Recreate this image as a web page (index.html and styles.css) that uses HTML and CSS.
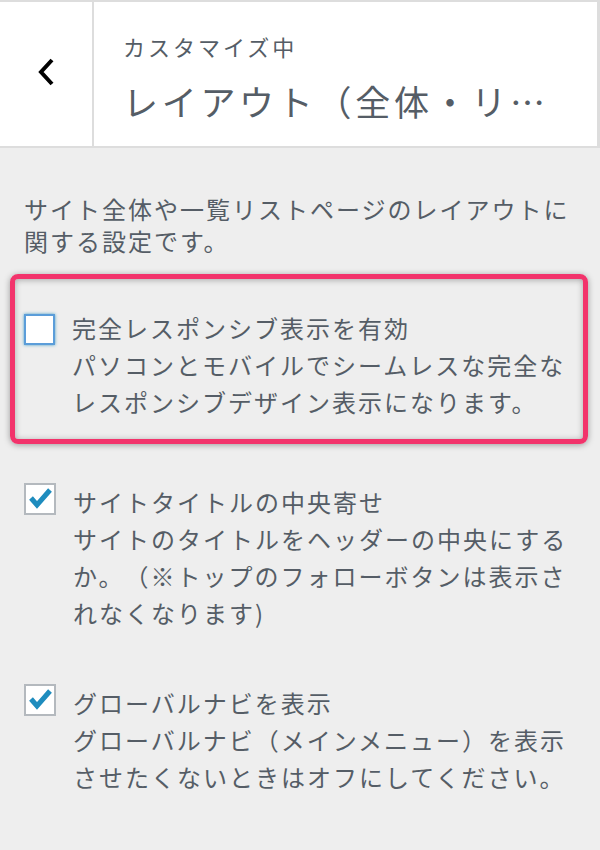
FILE: index.html
```html
<!DOCTYPE html>
<html lang="ja">
<head>
    <meta charset="UTF-8">
    <meta name="viewport" content="width=device-width, initial-scale=1.0">
    <title>カスタマイズ中</title>
    <link rel="stylesheet" href="styles.css">
</head>
<body>
    <div class="header">
        <button class="back" aria-label="戻る">
            <svg width="20" height="30" viewBox="0 0 20 30">
                <polyline points="15,3 4,15 15,27" fill="none" stroke="#000" stroke-width="4"/>
            </svg>
        </button>
        <div class="title-block">
            <span class="subtitle">カスタマイズ中</span>
            <h1 class="title">レイアウト（全体・リストページ）</h1>
        </div>
    </div>

    <div class="panel">
        <p class="desc">サイト全体や一覧リストページのレイアウトに関する設定です。</p>

        <div class="highlight">
            <label class="option">
                <span class="check focus"></span>
                <span class="option-text">完全レスポンシブ表示を有効<br>パソコンとモバイルでシームレスな完全なレスポンシブデザイン表示になります。</span>
            </label>
        </div>

        <div class="options">
            <label class="option">
                <span class="check checked">
                    <svg width="28" height="28" viewBox="0 0 28 28">
                        <polyline points="5,13 11,20 24,5" fill="none" stroke="#1e8cbe" stroke-width="5"/>
                    </svg>
                </span>
                <span class="option-text">サイトタイトルの中央寄せ<br>サイトのタイトルをヘッダーの中央にするか。（※トップのフォローボタンは表示されなくなります)</span>
            </label>

            <label class="option">
                <span class="check checked">
                    <svg width="28" height="28" viewBox="0 0 28 28">
                        <polyline points="5,13 11,20 24,5" fill="none" stroke="#1e8cbe" stroke-width="5"/>
                    </svg>
                </span>
                <span class="option-text">グローバルナビを表示<br>グローバルナビ（メインメニュー）を表示させたくないときはオフにしてください。</span>
            </label>
        </div>
    </div>
</body>
</html>
```

FILE: styles.css
```css
body {
    margin: 0;
    background-color: #eeeeee;
    font-family: "Noto Sans CJK JP", "Noto Sans", sans-serif;
    color: #555d66;
    text-spacing-trim: space-all;
}

.header {
    display: flex;
    height: 144px;
    background-color: #fff;
    border-top: 2px solid #dddddd;
    border-bottom: 2px solid #dddddd;
    border-right: 3px solid #dddddd;
}

.back {
    width: 94px;
    flex-shrink: 0;
    display: flex;
    align-items: center;
    justify-content: center;
    padding: 0 0 0 2px;
    margin: 0;
    background: none;
    border: none;
    border-right: 2px solid #dddddd;
    cursor: pointer;
}

.back svg {
    margin-top: -4px;
}

.title-block {
    flex: 1;
    min-width: 0;
    display: flex;
    flex-direction: column;
    padding: 31px 32px 0 29px;
}

.subtitle {
    font-size: 22px;
    line-height: 26px;
    letter-spacing: 3px;
}

.title {
    margin: 20px 0 0;
    font-size: 35px;
    line-height: 44px;
    font-weight: normal;
    letter-spacing: 3.7px;
    white-space: nowrap;
    overflow: hidden;
    text-overflow: ellipsis;
}

.panel {
    padding: 45px 12px 40px 10px;
}

.desc {
    margin: 0 0 0 14px;
    font-size: 24px;
    line-height: 32px;
    letter-spacing: 2px;
}

.highlight {
    margin-top: 17px;
    padding: 30px 12px 19px 9px;
    border: 5px solid #f2336b;
    border-radius: 8px;
    box-shadow: 0 1px 6px rgba(0, 0, 0, 0.35), inset 0 1px 6px rgba(0, 0, 0, 0.3);
}

.options {
    margin-top: 39px;
    padding: 0 17px 0 14px;
}

.option {
    display: flex;
    align-items: flex-start;
    gap: 17px;
    cursor: pointer;
}

.option + .option {
    margin-top: 53px;
}

.check {
    flex-shrink: 0;
    width: 28px;
    height: 28px;
    background-color: #fff;
    border: 2px solid #b4b9be;
}

.check.focus {
    width: 27px;
    height: 27px;
    margin-top: 5px;
    border-color: #5b9dd9;
    box-shadow: 0 0 3px rgba(30, 140, 190, 0.8);
}

.check svg {
    display: block;
}

.option-text {
    font-size: 24px;
    line-height: 37px;
    letter-spacing: 2px;
}
```
